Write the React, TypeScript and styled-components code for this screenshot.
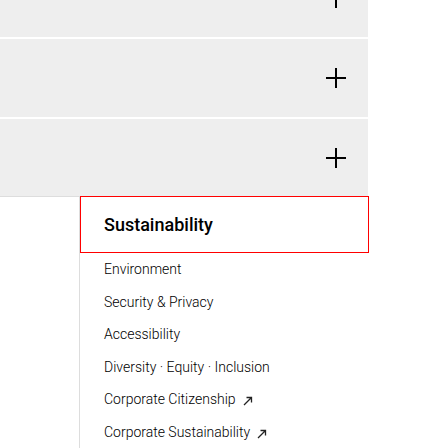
import React from "react";
import styled, { createGlobalStyle } from "styled-components";

const GlobalStyle = createGlobalStyle`
  html, body { margin: 0; padding: 0; background: #ffffff; }
  body { font-family: Roboto, "Liberation Sans", sans-serif; color: #000; overflow: hidden; }
`;

const Page = styled.div`
  width: 368px;
  margin-top: -41px;
`;

const Accordion = styled.div`
  display: flex;
  flex-direction: column;
  gap: 2px;
`;

const Row = styled.div<{ $last?: boolean }>`
  height: ${(p) => (p.$last ? 77 : 78)}px;
  background: #eeeeee;
  display: flex;
  align-items: center;
  justify-content: flex-end;
  padding-right: 22px;
`;

const Section = styled.div`
  border-top: 1px solid #dddddd;
`;

const SubNav = styled.div`
  margin-left: 79px;
  border-left: 1px solid #dddddd;
  padding-bottom: 40px;
`;

const Heading = styled.div`
  position: relative;
  height: 57px;
  box-sizing: border-box;
  margin-top: -1px;
  margin-right: -1px;
  border: 1px solid #ff0000;
  display: flex;
  align-items: center;
  padding-left: 23px;
  font-size: 18px;
  font-weight: 500;
  color: #000;
`;

const List = styled.ul`
  list-style: none;
  margin: 0;
  padding: 0;
`;

const Item = styled.li`
  padding: 5px 0 5px 24px;
  font-size: 14px;
  font-weight: 300;
  line-height: 22.5px;
  color: #000;
  display: flex;
  align-items: center;
  gap: 7px;
`;

const Plus = () => (
  <svg width="20" height="20" viewBox="0 0 20 20" fill="none" stroke="#000" strokeWidth="2">
    <path d="M0 10 H20 M10 0 V20" />
  </svg>
);

const Arrow = () => (
  <svg width="10" height="10" viewBox="0 0 10 10" fill="none" stroke="#222" strokeWidth="1.3" style={{ marginTop: 4 }}>
    <path d="M1 9 L8.5 1.5 M3.5 1.5 H8.5 V6.5" />
  </svg>
);

const items: { label: string; external?: boolean }[] = [
  { label: "Environment" },
  { label: "Security & Privacy" },
  { label: "Accessibility" },
  { label: "Diversity · Equity · Inclusion" },
  { label: "Corporate Citizenship", external: true },
  { label: "Corporate Sustainability", external: true },
];

export default function App() {
  return (
    <>
      <GlobalStyle />
      <Page>
        <Accordion>
          <Row><Plus /></Row>
          <Row><Plus /></Row>
          <Row $last><Plus /></Row>
        </Accordion>
        <Section>
          <SubNav>
            <Heading>Sustainability</Heading>
            <List>
              {items.map((it) => (
                <Item key={it.label}>
                  <span>{it.label}</span>
                  {it.external && <Arrow />}
                </Item>
              ))}
            </List>
          </SubNav>
        </Section>
      </Page>
    </>
  );
}
